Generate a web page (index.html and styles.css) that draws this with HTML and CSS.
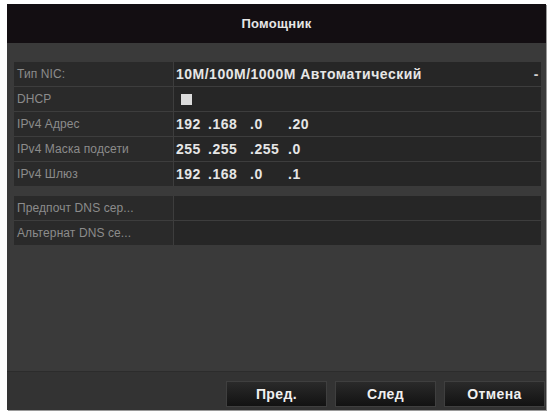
FILE: index.html
```html
<!DOCTYPE html>
<html lang="ru">
<head>
<meta charset="utf-8">
<link rel="stylesheet" href="styles.css">
</head>
<body>
<div class="window">
  <div class="header">Помощник</div>
  <div class="content">
    <div class="table">
      <div class="row"><div class="label">Тип NIC:</div><div class="value">10M/100M/1000M Автоматический<span class="drop">-</span></div></div>
      <div class="row"><div class="label">DHCP</div><div class="value"><span class="check"></span></div></div>
      <div class="row"><div class="label">IPv4 Адрес</div><div class="value ip"><span>192</span><span>.168</span><span>.0</span><span>.20</span></div></div>
      <div class="row"><div class="label">IPv4 Маска подсети</div><div class="value ip"><span>255</span><span>.255</span><span>.255</span><span>.0</span></div></div>
      <div class="row"><div class="label">IPv4 Шлюз</div><div class="value ip"><span>192</span><span>.168</span><span>.0</span><span>.1</span></div></div>
    </div>
    <div class="table">
      <div class="row"><div class="label">Предпочт DNS сер...</div><div class="value"></div></div>
      <div class="row"><div class="label">Альтернат DNS се...</div><div class="value"></div></div>
    </div>
  </div>
  <div class="footer">
    <button class="btn">Пред.</button>
    <button class="btn">След</button>
    <button class="btn">Отмена</button>
  </div>
</div>
</body>
</html>
```
FILE: styles.css
```css
html, body {
  margin: 0;
  padding: 0;
  background: #ffffff;
}
body {
  padding: 4px 8px 4px 7px;
  font-family: "Liberation Sans", Arial, sans-serif;
}
.window {
  width: 539px;
  height: 406px;
  background: #3a3a3a;
  display: flex;
  flex-direction: column;
  box-shadow: 1px 1px 0 #9a9a9a;
}
.header {
  height: 39px;
  background: #130e12;
  color: #e6e6e6;
  font-size: 13px;
  font-weight: bold;
  letter-spacing: 0.3px;
  display: flex;
  align-items: center;
  justify-content: center;
}
.content {
  flex: 1;
  padding: 19px 5px 0 7px;
  display: flex;
  flex-direction: column;
  gap: 10px;
}
.table {
  display: flex;
  flex-direction: column;
  gap: 1px;
  background: #3d3d3d;
}
.row {
  display: flex;
  height: 24px;
  gap: 1px;
}
.label {
  width: 159px;
  background: #2a2a2a;
  color: #8c8c8c;
  font-size: 12px;
  letter-spacing: 0.1px;
  display: flex;
  align-items: center;
  padding-left: 3px;
  box-sizing: border-box;
}
.value {
  flex: 1;
  background: #262626;
  color: #e6e6e6;
  font-size: 14px;
  font-weight: bold;
  letter-spacing: 0.5px;
  display: flex;
  align-items: center;
  padding-left: 2px;
  position: relative;
}
.drop {
  position: absolute;
  right: 2px;
  top: 4px;
  color: #d0d0d0;
}
.check {
  width: 11px;
  height: 11px;
  background: #dcdcdc;
  margin-left: 5px;
}
.ip span { display: inline-block; }
.ip span:nth-child(1) { width: 32px; }
.ip span:nth-child(2) { width: 42px; }
.ip span:nth-child(3) { width: 38px; }
.footer {
  height: 38px;
  border-top: 1px solid #2c2c2c;
  background: #333333;
  display: flex;
  justify-content: flex-end;
  align-items: flex-end;
  gap: 8px;
  padding: 0 1px 3px 0;
  box-sizing: border-box;
  height: 39px;
}
.btn {
  width: 101px;
  height: 26px;
  border: 1px solid #3f3f3f;
  background: linear-gradient(#2a2a2a, #121212);
  color: #f0f0f0;
  font-family: "Liberation Sans", Arial, sans-serif;
  font-size: 14px;
  font-weight: bold;
  letter-spacing: 0.4px;
  padding: 0;
}
```
